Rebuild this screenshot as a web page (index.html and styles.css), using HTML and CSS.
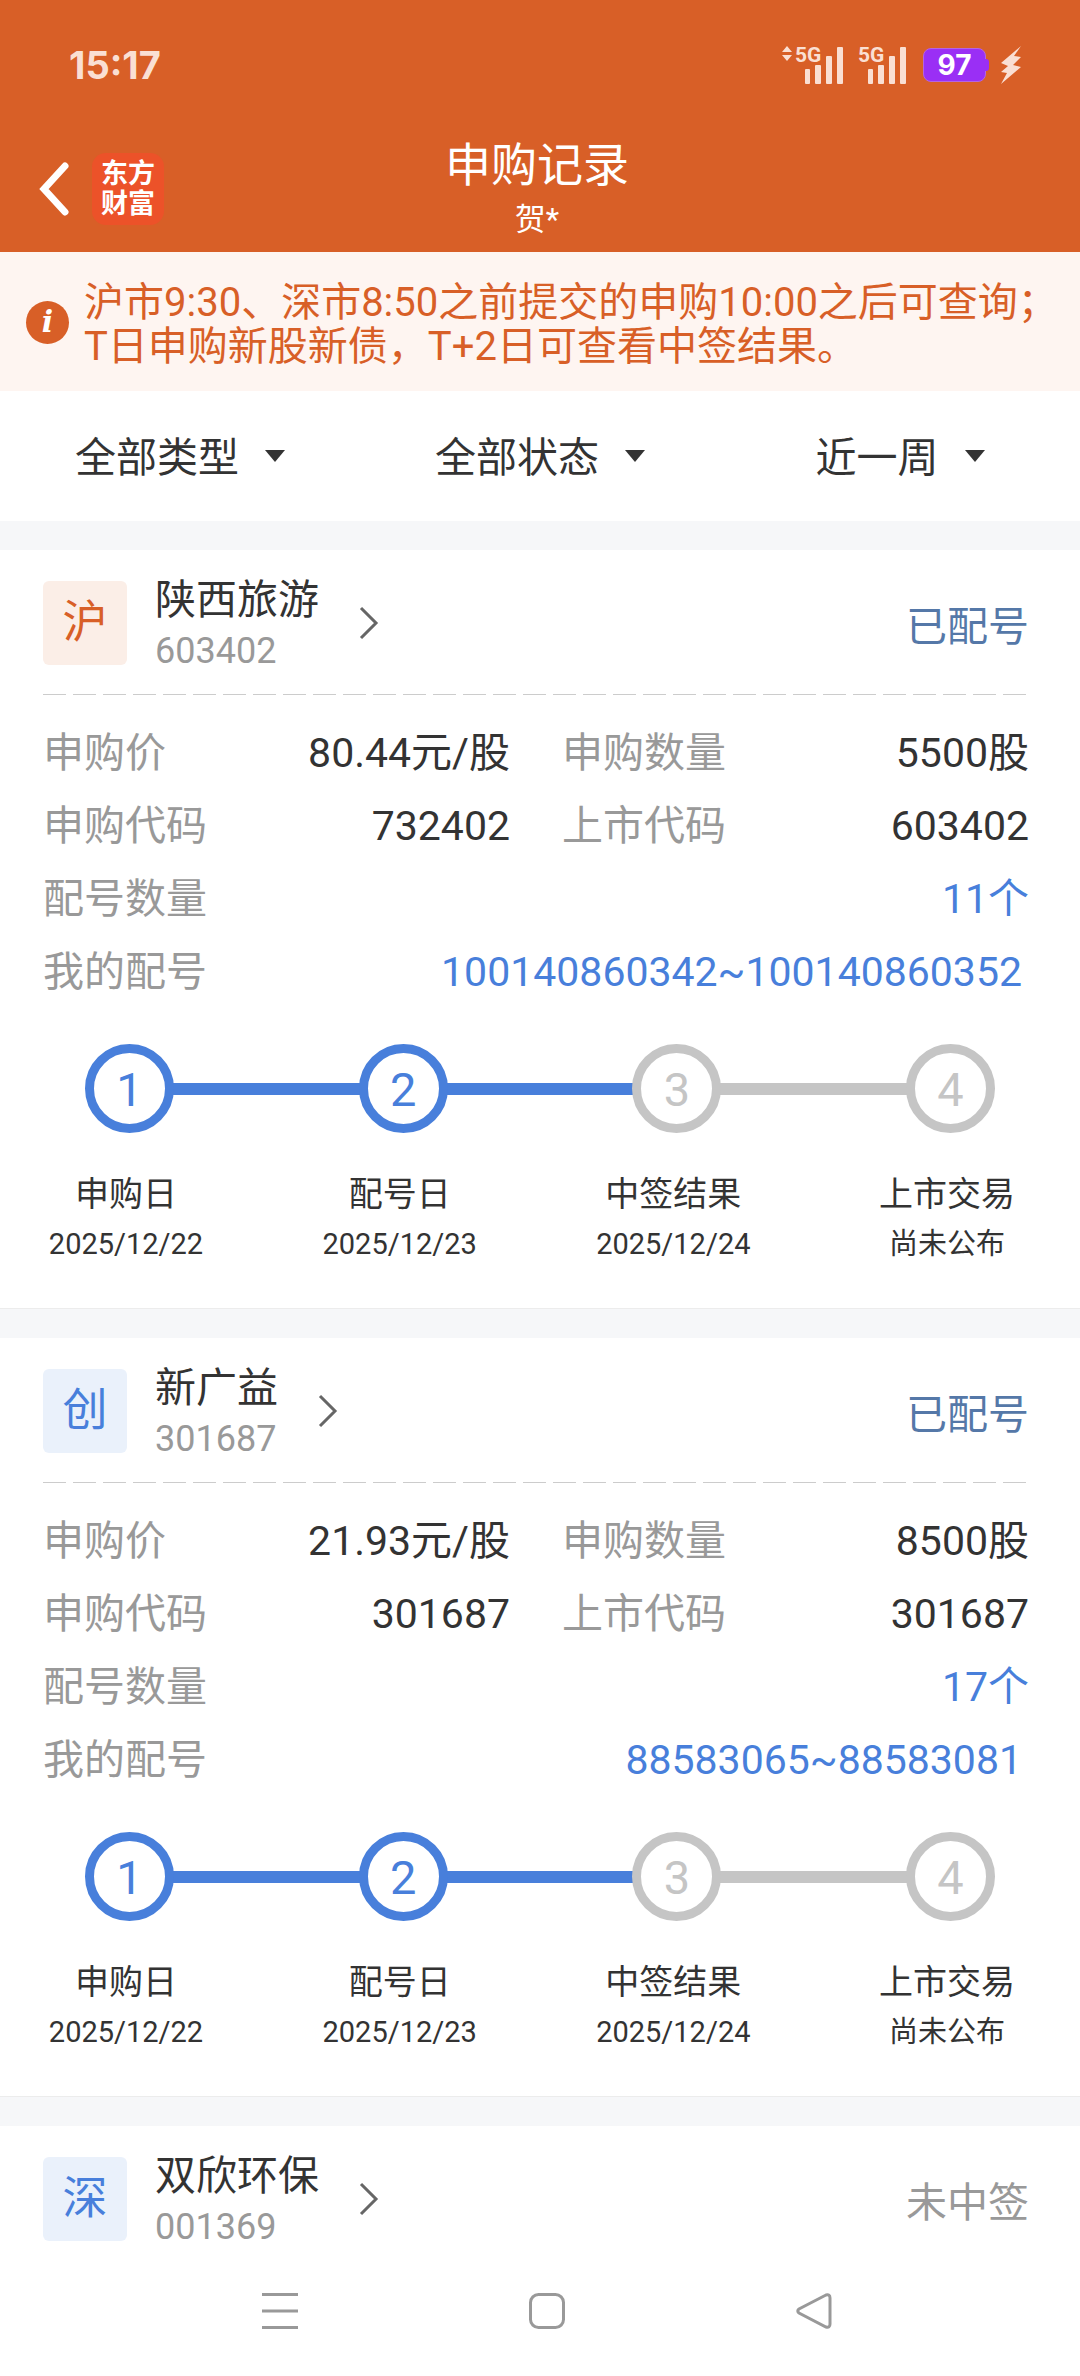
FILE: index.html
```html
<!DOCTYPE html>
<html lang="zh-CN">
<head>
    <meta charset="UTF-8">
    <meta name="viewport" content="width=device-width, initial-scale=1.0">
    <title>申购记录</title>
    <link rel="stylesheet" href="styles.css">
</head>
<body>
    <header class="header">
        <div class="status-bar">
            <span class="time">15:17</span>
            <div class="status-icons">
                <svg class="arrows" width="10" height="15" viewBox="0 0 10 15"><path d="M5 0l5 6H0zM5 15l5-6H0z"/></svg>
                <span class="signal">
                    <span class="net">5G</span>
                    <svg width="38" height="37" viewBox="0 0 38 37"><rect x="0" y="22" width="5" height="15" rx="1"/><rect x="10" y="18" width="6" height="19" rx="1"/><rect x="21" y="9" width="6" height="28" rx="1"/><rect x="32" y="0" width="6" height="37" rx="1"/></svg>
                </span>
                <span class="signal">
                    <span class="net">5G</span>
                    <svg width="38" height="37" viewBox="0 0 38 37"><rect x="0" y="22" width="5" height="15" rx="1"/><rect x="10" y="18" width="6" height="19" rx="1"/><rect x="21" y="9" width="6" height="28" rx="1"/><rect x="32" y="0" width="6" height="37" rx="1"/></svg>
                </span>
                <span class="battery">97</span>
                <svg class="bolt" width="22" height="38" viewBox="0 0 22 38"><path d="M21 0L1 17l7 3-7 6 6 1-6 11 20-17-8-2 8-8-7-1z"/></svg>
            </div>
        </div>
        <div class="title-bar">
            <div class="title-left">
                <button type="button" class="back" aria-label="返回">
                    <svg width="32" height="54" viewBox="0 0 32 54"><path d="M28 4L7 27l21 23"/></svg>
                </button>
                <span class="logo">东方<br>财富</span>
            </div>
            <div class="title">
                <h1>申购记录</h1>
                <p>贺*</p>
            </div>
        </div>
    </header>

    <div class="notice">
        <span class="info">i</span>
        <p>沪市9:30、深市8:50之前提交的申购10:00之后可查询；<br>T日申购新股新债，T+2日可查看中签结果。</p>
    </div>

    <form class="filters">
        <div class="filter">
            <select aria-label="类型">
                <option>全部类型</option>
            </select>
        </div>
        <div class="filter">
            <select aria-label="状态">
                <option>全部状态</option>
            </select>
        </div>
        <div class="filter">
            <select aria-label="时间">
                <option>近一周</option>
                <option>近一月</option>
            </select>
        </div>
    </form>

    <main>
        <section class="card">
            <div class="card-head">
                <span class="market market-sh">沪</span>
                <a href="#" class="stock">
                    <span class="stock-text">
                        <span class="name">陕西旅游</span>
                        <span class="code">603402</span>
                    </span>
                    <svg class="chevron" width="20" height="34" viewBox="0 0 20 34"><path d="M2 2l15 15L2 32"/></svg>
                </a>
                <span class="state">已配号</span>
            </div>
            <dl class="info-list">
                <div class="item"><dt>申购价</dt><dd>80.44元/股</dd></div>
                <div class="item"><dt>申购数量</dt><dd>5500股</dd></div>
                <div class="item"><dt>申购代码</dt><dd>732402</dd></div>
                <div class="item"><dt>上市代码</dt><dd>603402</dd></div>
                <div class="item wide"><dt>配号数量</dt><dd class="blue">11个</dd></div>
                <div class="item wide"><dt>我的配号</dt><dd class="blue numbers">100140860342~100140860352</dd></div>
            </dl>
            <div class="track">
                <span class="dot done">1</span>
                <span class="line done"></span>
                <span class="dot done">2</span>
                <span class="line done"></span>
                <span class="dot">3</span>
                <span class="line"></span>
                <span class="dot">4</span>
            </div>
            <div class="labels">
                <div class="label"><b>申购日</b><span>2025/12/22</span></div>
                <div class="label"><b>配号日</b><span>2025/12/23</span></div>
                <div class="label"><b>中签结果</b><span>2025/12/24</span></div>
                <div class="label"><b>上市交易</b><span>尚未公布</span></div>
            </div>
        </section>

        <section class="card">
            <div class="card-head">
                <span class="market">创</span>
                <a href="#" class="stock">
                    <span class="stock-text">
                        <span class="name">新广益</span>
                        <span class="code">301687</span>
                    </span>
                    <svg class="chevron" width="20" height="34" viewBox="0 0 20 34"><path d="M2 2l15 15L2 32"/></svg>
                </a>
                <span class="state">已配号</span>
            </div>
            <dl class="info-list">
                <div class="item"><dt>申购价</dt><dd>21.93元/股</dd></div>
                <div class="item"><dt>申购数量</dt><dd>8500股</dd></div>
                <div class="item"><dt>申购代码</dt><dd>301687</dd></div>
                <div class="item"><dt>上市代码</dt><dd>301687</dd></div>
                <div class="item wide"><dt>配号数量</dt><dd class="blue">17个</dd></div>
                <div class="item wide"><dt>我的配号</dt><dd class="blue numbers">88583065~88583081</dd></div>
            </dl>
            <div class="track">
                <span class="dot done">1</span>
                <span class="line done"></span>
                <span class="dot done">2</span>
                <span class="line done"></span>
                <span class="dot">3</span>
                <span class="line"></span>
                <span class="dot">4</span>
            </div>
            <div class="labels">
                <div class="label"><b>申购日</b><span>2025/12/22</span></div>
                <div class="label"><b>配号日</b><span>2025/12/23</span></div>
                <div class="label"><b>中签结果</b><span>2025/12/24</span></div>
                <div class="label"><b>上市交易</b><span>尚未公布</span></div>
            </div>
        </section>

        <section class="card card-last">
            <div class="card-head">
                <span class="market">深</span>
                <a href="#" class="stock">
                    <span class="stock-text">
                        <span class="name">双欣环保</span>
                        <span class="code">001369</span>
                    </span>
                    <svg class="chevron" width="20" height="34" viewBox="0 0 20 34"><path d="M2 2l15 15L2 32"/></svg>
                </a>
                <span class="state state-off">未中签</span>
            </div>
        </section>
    </main>

    <nav class="nav">
        <button type="button" aria-label="菜单">
            <svg width="36" height="36" viewBox="0 0 36 36"><path d="M0 1.5h36M0 18h36M0 34.5h36"/></svg>
        </button>
        <button type="button" aria-label="主页">
            <svg width="36" height="36" viewBox="0 0 36 36"><rect x="1.5" y="1.5" width="33" height="33" rx="8"/></svg>
        </button>
        <button type="button" aria-label="后退">
            <svg width="36" height="36" viewBox="0 0 36 36"><path d="M30 2L3 16q-2.500 2 0 4l27 14q4 1 4-3V5q0-4-4-3z"/></svg>
        </button>
    </nav>
</body>
</html>
```
FILE: styles.css
```css
* {
    box-sizing: border-box;
}
body {
    margin: 0;
    background: #fff;
    color: #333;
    font-family: Roboto, "Noto Sans CJK SC", sans-serif;
    font-size: 41px;
}
h1, p, dl, dd {
    margin: 0;
}
button {
    display: flex;
    padding: 0;
    border: none;
    background: none;
    cursor: pointer;
}
svg {
    display: block;
}

/* header */
.header {
    background: #d85f27;
    color: #fff;
}
.status-bar {
    display: flex;
    justify-content: space-between;
    align-items: center;
    height: 130px;
    padding: 0 58px 0 69px;
    color: #fadfd3;
    fill: #fadfd3;
}
.time {
    font-family: Inter, sans-serif;
    font-size: 38px;
    font-weight: bold;
}
.status-icons {
    display: flex;
    align-items: center;
}
.arrows {
    align-self: flex-start;
    margin-right: 3px;
}
.signal {
    position: relative;
    margin-right: 15px;
    padding-left: 10px;
}
.signal + .battery {
    margin-left: 2px;
}
.net {
    position: absolute;
    left: 0;
    top: 0;
    font-family: "Liberation Sans Narrow", Roboto, sans-serif;
    font-size: 21px;
    font-weight: bold;
    line-height: 16px;
}
.battery {
    position: relative;
    width: 63px;
    border: 1px solid #b565e0;
    border-radius: 8px;
    background: #9a2ff5;
    color: #fff;
    font-family: Inter, sans-serif;
    font-size: 28px;
    font-weight: bold;
    line-height: 32px;
    text-align: center;
}
.battery::after {
    content: "";
    position: absolute;
    right: -4px;
    top: 10px;
    width: 4px;
    height: 12px;
    border-radius: 0 3px 3px 0;
    background: #9a2ff5;
}
.bolt {
    margin-left: 14px;
}
.title-bar {
    display: grid;
    grid-template-columns: 1fr auto 1fr;
    align-items: center;
    height: 122px;
    padding: 0 43px 5px 37px;
}
.title-left {
    display: flex;
    align-items: center;
    gap: 23px;
}
.back path {
    fill: none;
    stroke: #fff;
    stroke-width: 7;
    stroke-linecap: round;
}
.logo {
    width: 72px;
    padding: 6px 0;
    border-radius: 14px;
    background: #ec5229;
    font-size: 27px;
    font-weight: bold;
    line-height: 30px;
    text-align: center;
}
.title {
    text-align: center;
}
.title h1 {
    font-size: 46px;
    font-weight: normal;
    line-height: 62px;
}
.title p {
    font-size: 31px;
    line-height: 48px;
}

/* notice */
.notice {
    display: flex;
    align-items: center;
    gap: 15px;
    padding: 23px 26px 22px;
    background: #fef5f1;
    color: #d85f27;
    font-size: 40px;
    line-height: 44px;
}
.notice p {
    padding-top: 6px;
    white-space: nowrap;
}
.info {
    flex: none;
    width: 43px;
    height: 43px;
    border-radius: 50%;
    background: #d85f27;
    color: #fff;
    font-family: "DejaVu Serif", serif;
    font-size: 30px;
    font-style: italic;
    font-weight: bold;
    line-height: 42px;
    text-align: center;
}

/* filters */
.filters {
    display: grid;
    grid-template-columns: repeat(3, 1fr);
    height: 130px;
}
.filter {
    display: flex;
    justify-content: center;
    align-items: center;
    gap: 26px;
}
.filter select {
    appearance: none;
    padding: 3px 0 0;
    border: none;
    background: none;
    color: inherit;
    font: inherit;
}
.filter::after {
    content: "";
    border: 10px solid transparent;
    border-top: 12px solid #333;
    border-bottom: 0;
}

/* cards */
main {
    border-top: 29px solid #f6f7f9;
}
.card {
    border-bottom: 29px solid #f6f7f9;
}
.card-head {
    display: flex;
    align-items: center;
    margin: 0 51px 0 43px;
    padding: 20px 0 19px;
    background: repeating-linear-gradient(to right, #ccc 0 23px, transparent 23px 30px) bottom / 100% 1px no-repeat;
}
.card-last {
    border-bottom: none;
}
.card-last .card-head {
    background: none;
}
.market {
    width: 84px;
    border-radius: 6px;
    background: #eaf1fb;
    color: #487fdb;
    font-size: 45px;
    line-height: 84px;
    text-align: center;
}
.market-sh {
    background: #fbeee7;
    color: #d85f27;
}
.stock {
    display: flex;
    align-items: center;
    gap: 40px;
    margin-left: 28px;
    color: inherit;
    text-decoration: none;
}
.stock-text {
    display: flex;
    flex-direction: column;
    padding-top: 4px;
}
.name {
    line-height: 52px;
}
.code {
    color: #999;
    font-size: 36px;
    line-height: 50px;
}
.chevron {
    fill: none;
    stroke: #666;
    stroke-width: 3;
}
.state {
    margin-left: auto;
    color: #5578a8;
}
.state-off {
    color: #999;
}
.info-list {
    display: grid;
    grid-template-columns: 1fr 1fr;
    column-gap: 52px;
    padding: 22px 51px 0 43px;
    line-height: 73px;
}
.item {
    display: flex;
    justify-content: space-between;
}
.wide {
    grid-column: span 2;
}
.item dt {
    color: #999;
}
.item .blue {
    color: #487fdb;
}
.item .numbers {
    padding-right: 7px;
}

/* steps */
.track {
    display: flex;
    align-items: center;
    padding: 35px 85px 41px;
}
.dot {
    position: relative;
    width: 89px;
    height: 89px;
    border: 9px solid #c5c5c5;
    border-radius: 50%;
    background: #fff;
    color: #c5c5c5;
    font-size: 47px;
    line-height: 74px;
    text-align: center;
}
.dot.done {
    border-color: #487fdb;
    color: #487fdb;
}
.line {
    flex: 1;
    height: 12px;
    margin: 0 -2px;
    background: #c5c5c5;
}
.line.done {
    background: #487fdb;
}
.labels {
    display: flex;
    justify-content: space-between;
    padding: 0 57px 46px 50px;
    border-bottom: 1px solid #ececec;
}
.label {
    display: flex;
    flex-direction: column;
    align-items: center;
    gap: 12px;
    width: 152px;
    font-size: 29px;
    line-height: 36px;
}
.label b {
    font-size: 34px;
    font-weight: normal;
    line-height: 40px;
}

/* bottom bar */
.nav {
    display: grid;
    grid-template-columns: repeat(3, 1fr);
    justify-items: center;
    padding: 22px 132px 47px 146px;
}
.nav svg {
    fill: none;
    stroke: #999;
    stroke-width: 3;
}
```
